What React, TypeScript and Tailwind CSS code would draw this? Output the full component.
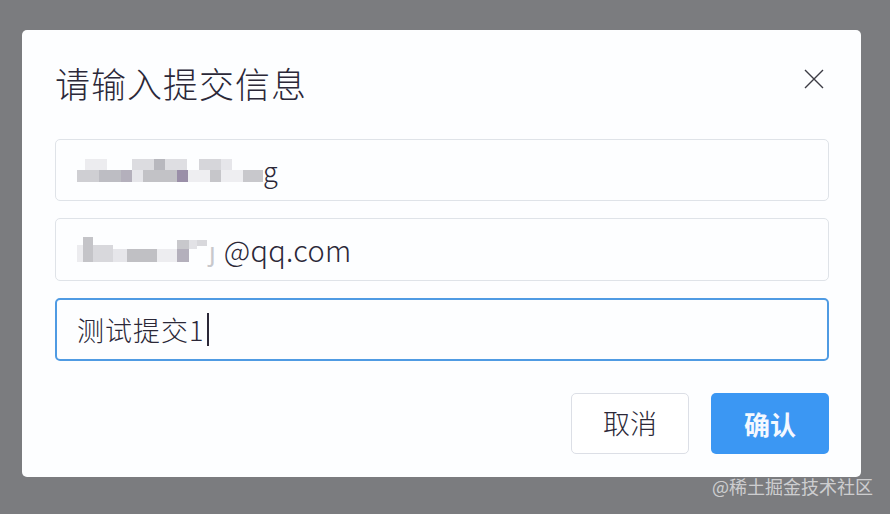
import React from "react";

const FONT = { fontFamily: '"Noto Sans CJK SC", "Noto Sans", sans-serif' };

// pixelated (mosaic) blocks standing in for blurred-out text
function Mosaic({ w, h, cells }: { w: number; h: number; cells: [number, number, number, number, string][] }) {
  return (
    <svg width={w} height={h} viewBox={`0 0 ${w} ${h}`} className="shrink-0">
      {cells.map(([x, y, cw, ch, c], i) => (
        <rect key={i} x={x} y={y} width={cw} height={ch} fill={c} />
      ))}
    </svg>
  );
}

const M1: [number, number, number, number, string][] = [
  [8, 0, 22, 11, "#ececef"],
  [55, 0, 22, 11, "#dcdce0"],
  [77, 0, 11, 11, "#b8b8be"],
  [88, 0, 22, 11, "#dedee2"],
  [122, 0, 22, 11, "#d6d6da"],
  [144, 0, 11, 11, "#e6e6ea"],
  [0, 11, 22, 12, "#cfcfd3"],
  [22, 11, 22, 12, "#bdbdc3"],
  [44, 11, 11, 12, "#b4b0bc"],
  [55, 11, 11, 12, "#e6e6ea"],
  [66, 11, 34, 12, "#c2c2c6"],
  [100, 11, 11, 12, "#9a8fa8"],
  [111, 11, 22, 12, "#eeeef1"],
  [133, 11, 11, 12, "#c6c6ca"],
  [144, 11, 22, 12, "#eeeef1"],
  [166, 11, 20, 12, "#c8c8cc"],
];

const M2: [number, number, number, number, string][] = [
  [0, 8, 6, 17, "#ececef"],
  [6, 0, 10, 25, "#c4c4c8"],
  [16, 8, 20, 17, "#d8d8dc"],
  [36, 12, 14, 13, "#e6e6ea"],
  [50, 12, 30, 13, "#c0c0c4"],
  [80, 12, 20, 13, "#ededf0"],
  [100, 3, 12, 9, "#c8c8cc"],
  [100, 12, 12, 13, "#b4b0bc"],
  [112, 3, 8, 9, "#e2e2e6"],
  [120, 3, 10, 6, "#d8d8dc"],
];

export default function App() {
  return (
    <div className="relative h-[514px] w-full overflow-hidden bg-[#7b7c7f]" style={FONT}>
      <div className="ml-[22px] mt-[30px] flex h-[447px] w-[839px] flex-col rounded-[5px] bg-[#fdfeff] pb-[23px] pl-[33px] pr-[32px] pt-[30px]">
        <div className="flex h-[44px] items-center justify-between">
          <h2 className="text-[35px] font-light leading-none tracking-[1px] text-[#2b2838]">请输入提交信息</h2>
          <svg width="20" height="20" viewBox="0 0 20 20" className="mr-[5px] -mt-[6px]" fill="none" stroke="#3c3c44" strokeWidth="1.4">
            <path d="M1 1 L19 19 M19 1 L1 19" />
          </svg>
        </div>

        <div className="mt-[35px] flex flex-col gap-[17px]">
          <div className="flex h-[62px] items-center rounded-[5px] border border-[#dfe3e8] pl-[21px]">
            <Mosaic w={190} h={23} cells={M1} />
            <span className="-ml-[4px] text-[27px] font-light leading-none text-[#2b2838]">g</span>
          </div>
          <div className="flex h-[63px] items-center rounded-[5px] border border-[#dfe3e8] pl-[21px]">
            <Mosaic w={130} h={25} cells={M2} />
            <span className="ml-[2px] text-[26px] leading-none text-[#c8c8cc]">ȷ</span>
            <span className="ml-[8px] text-[29px] font-light leading-none tracking-[0.3px] text-[#2b2838]">@qq.com</span>
          </div>
          <div className="flex h-[63px] items-center rounded-[5px] border-2 border-[#4f9be3] pl-[20px]">
            <span className="text-[27px] font-light leading-none tracking-[1px] text-[#2b2838]">测试提交1</span>
            <span className="ml-[3px] h-[33px] w-[2px] bg-[#2b2838]" />
          </div>
        </div>

        <div className="mt-[32px] flex justify-end gap-[22px]">
          <button className="h-[61px] w-[118px] rounded-[5px] border border-[#dcdfe6] bg-white text-[27px] font-light text-[#2b2838]">取消</button>
          <button className="h-[61px] w-[118px] rounded-[5px] bg-[#3b97f3] text-[26px] font-bold text-[#f4f8ff]">确认</button>
        </div>
      </div>

      <div className="absolute left-[712px] top-[477px] text-[18px] leading-none text-[#e4e4e6]/80">@稀土掘金技术社区</div>
    </div>
  );
}
